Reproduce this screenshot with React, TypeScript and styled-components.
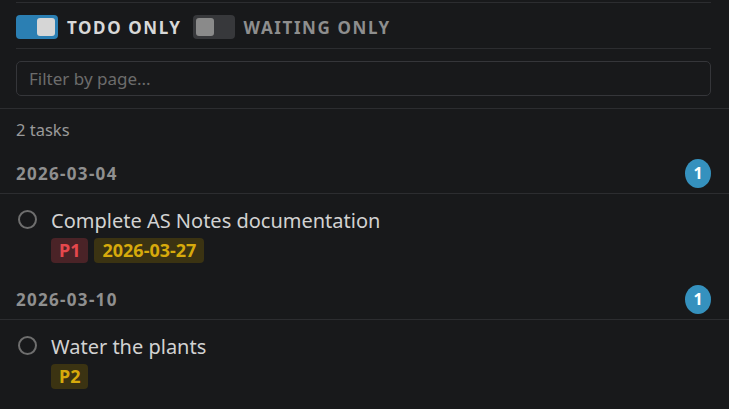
import React from 'react';
import styled, { createGlobalStyle } from 'styled-components';

const GlobalStyle = createGlobalStyle`
	html, body {
		margin: 0;
		padding: 0;
		background: #18191b;
	}
	body {
		font-family: 'Noto Sans', 'Open Sans', sans-serif;
		color: #cccccc;
	}
`;

const Page = styled.div`
	width: 729px;
	height: 409px;
	overflow: hidden;
	background: #18191b;
`;

const Top = styled.div`
	padding: 0 18px 0 16px;
`;

const TopRule = styled.div`
	height: 1px;
	margin-top: 2px;
	background: #2c2d30;
`;

const ToggleRow = styled.div`
	display: flex;
	align-items: center;
	height: 46px;
	padding-top: 3px;
	box-sizing: border-box;
	border-bottom: 1px solid #2c2d30;
`;

const Toggle = styled.div<{ $on?: boolean }>`
	display: flex;
	align-items: center;
	justify-content: ${(p) => (p.$on ? 'flex-end' : 'flex-start')};
	box-sizing: border-box;
	width: 42px;
	height: 24px;
	padding: 0 3px;
	border-radius: 4px;
	background: ${(p) => (p.$on ? '#2b7fb3' : '#37383b')};
`;

const Knob = styled.div<{ $on?: boolean }>`
	width: 18px;
	height: 18px;
	border-radius: 3px;
	background: ${(p) => (p.$on ? '#d6d6d6' : '#8a8a8a')};
`;

const ToggleLabel = styled.span<{ $on?: boolean }>`
	margin: 0 11px 0 9px;
	font-size: 17px;
	font-weight: 700;
	letter-spacing: 1.6px;
	color: ${(p) => (p.$on ? '#d8d8d8' : '#8e8e8e')};
`;

const FilterWrap = styled.div`
	padding: 12px 0 12px;
`;

const FilterInput = styled.input`
	box-sizing: border-box;
	width: 100%;
	height: 35px;
	padding: 0 12px;
	border: 1px solid #35363a;
	border-radius: 5px;
	background: #18191b;
	font-family: 'Noto Sans', 'Open Sans', sans-serif;
	font-size: 17px;
	color: #cccccc;
	outline: none;
	&::placeholder {
		color: #6c6c6c;
	}
`;

const Count = styled.div`
	box-sizing: border-box;
	border-top: 1px solid #2c2d30;
	padding: 9px 16px 0;
	height: 45px;
	font-size: 16.5px;
	color: #9a9a9a;
`;

const GroupHeader = styled.div`
	display: flex;
	align-items: center;
	justify-content: space-between;
	box-sizing: border-box;
	height: 41px;
	padding: 0 18px 0 16px;
	border-bottom: 1px solid #2c2d30;
`;

const GroupDate = styled.span`
	font-size: 17px;
	font-weight: 700;
	letter-spacing: 1.3px;
	color: #8f8f8f;
`;

const Badge = styled.span`
	display: flex;
	align-items: center;
	justify-content: center;
	width: 26px;
	height: 29px;
	border-radius: 50%;
	background: #3591be;
	font-size: 16px;
	font-weight: 700;
	color: #ffffff;
`;

const Task = styled.div`
	display: flex;
	gap: 14px;
	padding: 14px 16px 16px 18px;
`;

const Check = styled.div`
	flex: none;
	box-sizing: border-box;
	width: 19px;
	height: 19px;
	margin-top: 2px;
	border: 2px solid #6e6e6e;
	border-radius: 50%;
`;

const TaskBody = styled.div`
	display: flex;
	flex-direction: column;
	gap: 4px;
`;

const TaskTitle = styled.div`
	font-size: 20px;
	line-height: 26px;
	color: #d2d2d2;
`;

const Tags = styled.div`
	display: flex;
	gap: 6px;
`;

const Tag = styled.span<{ $tone: 'red' | 'yellow' }>`
	padding: 0 8px;
	height: 25px;
	line-height: 25px;
	border-radius: 4px;
	font-size: 18px;
	font-weight: 700;
	background: ${(p) => (p.$tone === 'red' ? '#4a2327' : '#3b3312')};
	color: ${(p) => (p.$tone === 'red' ? '#e5484d' : '#d7aa0c')};
`;

type TaskItem = { title: string; tags: { text: string; tone: 'red' | 'yellow' }[] };

const groups: { date: string; tasks: TaskItem[] }[] = [
	{
		date: '2026-03-04',
		tasks: [
			{
				title: 'Complete AS Notes documentation',
				tags: [
					{ text: 'P1', tone: 'red' },
					{ text: '2026-03-27', tone: 'yellow' },
				],
			},
		],
	},
	{
		date: '2026-03-10',
		tasks: [{ title: 'Water the plants', tags: [{ text: 'P2', tone: 'yellow' }] }],
	},
];

function App() {
	return (
		<Page>
			<GlobalStyle />
			<Top>
				<TopRule />
				<ToggleRow>
					<Toggle $on>
						<Knob $on />
					</Toggle>
					<ToggleLabel $on>TODO ONLY</ToggleLabel>
					<Toggle>
						<Knob />
					</Toggle>
					<ToggleLabel>WAITING ONLY</ToggleLabel>
				</ToggleRow>
				<FilterWrap>
					<FilterInput placeholder='Filter by page...' />
				</FilterWrap>
			</Top>
			<Count>2 tasks</Count>
			{groups.map((g) => (
				<React.Fragment key={g.date}>
					<GroupHeader>
						<GroupDate>{g.date}</GroupDate>
						<Badge>{g.tasks.length}</Badge>
					</GroupHeader>
					{g.tasks.map((t) => (
						<Task key={t.title}>
							<Check />
							<TaskBody>
								<TaskTitle>{t.title}</TaskTitle>
								<Tags>
									{t.tags.map((tag) => (
										<Tag key={tag.text} $tone={tag.tone}>
											{tag.text}
										</Tag>
									))}
								</Tags>
							</TaskBody>
						</Task>
					))}
				</React.Fragment>
			))}
		</Page>
	);
}

export default App;
